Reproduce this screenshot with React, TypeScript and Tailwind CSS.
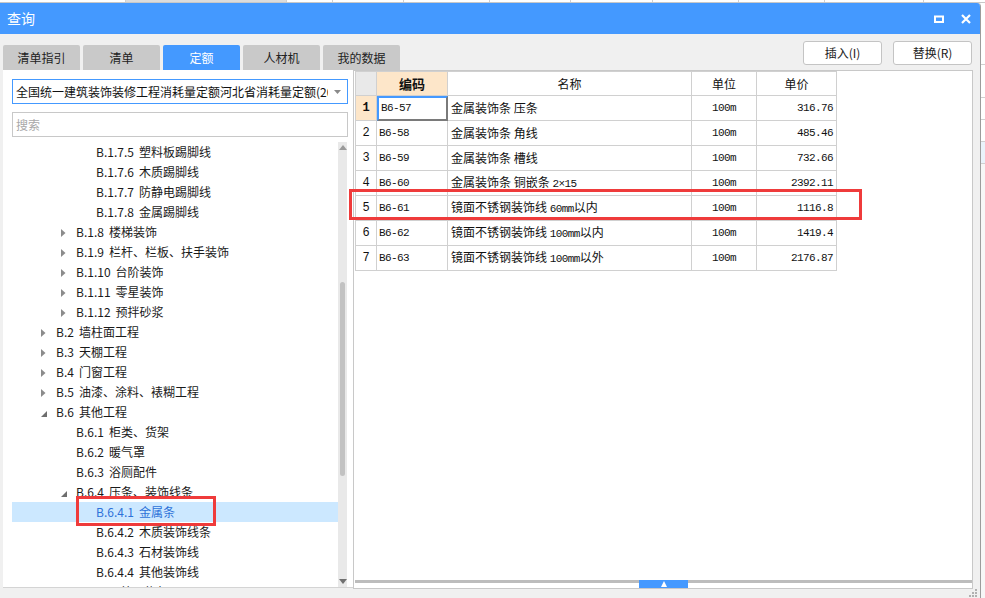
import React from 'react';

const UI = { fontFamily: '"Noto Sans CJK SC", "Microsoft YaHei", sans-serif' };
const MONO = { fontFamily: '"Liberation Mono", "Noto Sans CJK SC", monospace' };

type Node = { label: string; level: 1 | 2 | 3; arrow?: 'closed' | 'open'; selected?: boolean };

const TREE: Node[] = [
  { label: 'B.1.7.5 塑料板踢脚线', level: 3 },
  { label: 'B.1.7.6 木质踢脚线', level: 3 },
  { label: 'B.1.7.7 防静电踢脚线', level: 3 },
  { label: 'B.1.7.8 金属踢脚线', level: 3 },
  { label: 'B.1.8 楼梯装饰', level: 2, arrow: 'closed' },
  { label: 'B.1.9 栏杆、栏板、扶手装饰', level: 2, arrow: 'closed' },
  { label: 'B.1.10 台阶装饰', level: 2, arrow: 'closed' },
  { label: 'B.1.11 零星装饰', level: 2, arrow: 'closed' },
  { label: 'B.1.12 预拌砂浆', level: 2, arrow: 'closed' },
  { label: 'B.2 墙柱面工程', level: 1, arrow: 'closed' },
  { label: 'B.3 天棚工程', level: 1, arrow: 'closed' },
  { label: 'B.4 门窗工程', level: 1, arrow: 'closed' },
  { label: 'B.5 油漆、涂料、裱糊工程', level: 1, arrow: 'closed' },
  { label: 'B.6 其他工程', level: 1, arrow: 'open' },
  { label: 'B.6.1 柜类、货架', level: 2 },
  { label: 'B.6.2 暖气罩', level: 2 },
  { label: 'B.6.3 浴厕配件', level: 2 },
  { label: 'B.6.4 压条、装饰线条', level: 2, arrow: 'open' },
  { label: 'B.6.4.1 金属条', level: 3, selected: true },
  { label: 'B.6.4.2 木质装饰线条', level: 3 },
  { label: 'B.6.4.3 石材装饰线', level: 3 },
  { label: 'B.6.4.4 其他装饰线', level: 3 },
  { label: 'B.6.5 雨篷、旗杆', level: 2 },
];

const ROWS = [
  ['B6-57', '金属装饰条 压条', '316.76'],
  ['B6-58', '金属装饰条 角线', '485.46'],
  ['B6-59', '金属装饰条 槽线', '732.66'],
  ['B6-60', '金属装饰条 铜嵌条 2×15', '2392.11'],
  ['B6-61', '镜面不锈钢装饰线 60mm以内', '1116.8'],
  ['B6-62', '镜面不锈钢装饰线 100mm以内', '1419.4'],
  ['B6-63', '镜面不锈钢装饰线 100mm以外', '2176.87'],
];

const TABS = ['清单指引', '清单', '定额', '人材机', '我的数据'];

const INDENT = { 1: 'pl-[29px]', 2: 'pl-[49px]', 3: 'pl-[69px]' } as const;

function Arrow({ kind }: { kind?: 'closed' | 'open' }) {
  if (kind === 'closed')
    return (
      <svg width="5" height="8" viewBox="0 0 5 8" className="mt-[1px]">
        <path d="M0 0 L4.5 4 L0 8 Z" fill="#8c8c8c" />
      </svg>
    );
  if (kind === 'open')
    return (
      <svg width="6" height="6" viewBox="0 0 6 6" className="mt-[3px]">
        <path d="M6 0 L6 6 L0 6 Z" fill="#6e6e6e" />
      </svg>
    );
  return null;
}

function TreeRow({ node }: { node: Node }) {
  const [code, ...rest] = node.label.split(' ');
  return (
    <div
      className={`flex items-center h-[20px] shrink-0 ${INDENT[node.level]} ${
        node.selected ? 'bg-[#cce8ff] text-[#2d72d9]' : 'text-[#1a1a1a]'
      }`}
    >
      <span className="w-[15px] flex items-center">
        <Arrow kind={node.arrow} />
      </span>
      <span className="text-[12px] whitespace-nowrap">
        {code}
        <span className="inline-block w-[5px]" />
        {rest.join(' ')}
      </span>
    </div>
  );
}

export default function App() {
  return (
    <div className="w-[985px] h-[598px] overflow-hidden relative bg-[#f4f4f4] flex flex-col" style={UI}>
      {/* background app strip behind the dialog */}
      <div className="h-[4px] flex bg-white border-b border-[#c8c8c8]">
        <div className="w-[126px] border-r border-[#d0d0d0]" />
        <div className="w-[161px] border-r border-[#d0d0d0] bg-[#8a8a8a]/30" />
        <div className="w-[46px] border-r border-[#d0d0d0]" />
        <div className="w-[71px] border-r border-[#d0d0d0]" />
        <div className="w-[86px] border-r border-[#d0d0d0]" />
        <div className="w-[81px] border-r border-[#d0d0d0]" />
        <div className="w-[82px] border-r border-[#d0d0d0]" />
        <div className="w-[86px] border-r border-[#d0d0d0]" />
        <div className="w-[86px] border-r border-[#d0d0d0]" />
        <div className="w-[99px] border-r border-[#d0d0d0]" />
      </div>

      <div className="flex flex-1">
        {/* dialog */}
        <div className="w-[981px] flex flex-col bg-[#f0f0f0] border-r border-[#9c9c9c] rounded-tr-[4px] overflow-hidden">
          {/* title bar */}
          <div className="h-[31px] bg-[#4499ff] flex items-center justify-between pl-[7px] pr-[9px]">
            <span className="text-white text-[14px]">查询</span>
            <div className="flex items-center gap-[17px]">
              <svg width="10" height="8" viewBox="0 0 10 8">
                <rect x="1" y="1.5" width="8" height="5.5" fill="none" stroke="white" strokeWidth="2" />
              </svg>
              <svg width="10" height="10" viewBox="0 0 10 10">
                <path d="M1 1 L9 9 M9 1 L1 9" stroke="white" strokeWidth="2.2" />
              </svg>
            </div>
          </div>

          {/* body */}
          <div className="flex-1 flex flex-col pl-[3px] pr-[7px]">
            <div className="h-[36px] flex justify-between items-start">
              <div className="flex gap-[3px] mt-[11px]">
                {TABS.map((t) => (
                  <div
                    key={t}
                    className={`w-[77px] h-[25px] flex items-center justify-center text-[12px] rounded-t-[2px] ${
                      t === '定额' ? 'bg-[#4499ff] text-white' : 'bg-[#c9c9c9] text-[#222]'
                    }`}
                  >
                    {t}
                  </div>
                ))}
              </div>
              <div className="flex gap-[11px] mt-[7px] mr-[1px]">
                <button className="w-[79px] h-[24px] bg-white border border-[#c4c4c4] rounded-[3px] text-[12px] text-[#222]">
                  插入(I)
                </button>
                <button className="w-[79px] h-[24px] bg-white border border-[#c4c4c4] rounded-[3px] text-[12px] text-[#222]">
                  替换(R)
                </button>
              </div>
            </div>

            <div className="flex h-[519px]">
              {/* left panel */}
              <div className="w-[350px] h-[518px] bg-white border-b border-[#d4d4d4] flex flex-col pl-[9px] pr-[5px]">
                <div className="mt-[9px] h-[25px] border border-[#4499ff] flex items-center pl-[3px] pr-[6px]">
                  <div className="flex-1 overflow-hidden whitespace-nowrap text-[12px] text-[#111]">
                    全国统一建筑装饰装修工程消耗量定额河北省消耗量定额(2012)
                  </div>
                  <svg width="7" height="4" viewBox="0 0 7 4" className="ml-[6px]">
                    <path d="M0 0 L7 0 L3.5 4 Z" fill="#8a8a8a" />
                  </svg>
                </div>
                <div className="mt-[8px] h-[25px] border border-[#c8c8c8] flex items-center pl-[3px] text-[12px] text-[#a8a8a8]">
                  搜索
                </div>
                <div className="mt-[5px] h-[445px] flex">
                  <div className="w-[326px] flex flex-col overflow-hidden">
                    {TREE.map((n) => (
                      <TreeRow key={n.label} node={n} />
                    ))}
                  </div>
                  {/* vertical scrollbar */}
                  <div className="w-[9px] bg-[#e9e9e9] flex flex-col items-center">
                    <svg width="8" height="5" viewBox="0 0 8 5" className="mt-[3px]">
                      <path d="M0 5 L4 0 L8 5 Z" fill="#9a9a9a" />
                    </svg>
                    <div className="mt-[132px] w-[5px] h-[194px] rounded-full bg-[#c2c2c2]" />
                    <div className="flex-1" />
                    <svg width="8" height="5" viewBox="0 0 8 5" className="mb-[3px]">
                      <path d="M0 0 L8 0 L4 5 Z" fill="#707070" />
                    </svg>
                  </div>
                </div>
              </div>

              {/* right panel */}
              <div className="w-[620px] h-[519px] bg-white border border-[#c8c8c8] flex flex-col pl-[1px]">
                <div className="grid grid-cols-[21px_71px_244px_65px_80px] w-fit border-l border-t border-[#d0d0d0] text-[12px] text-[#111]">
                  <div className="h-[24px] bg-[#e9e9e9] border-r border-b border-[#d0d0d0]" />
                  <div className="h-[24px] bg-[#fde6c9] border-r border-b border-[#d0d0d0] flex items-center justify-center font-bold text-[13px]">
                    编码
                  </div>
                  <div className="h-[24px] border-r border-b border-[#d0d0d0] flex items-center justify-center">名称</div>
                  <div className="h-[24px] border-r border-b border-[#d0d0d0] flex items-center justify-center">单位</div>
                  <div className="h-[24px] border-r border-b border-[#d0d0d0] flex items-center justify-center">单价</div>
                  {ROWS.map(([code, name, price], i) => (
                    <React.Fragment key={code}>
                      <div
                        className={`h-[25px] border-r border-b border-[#d0d0d0] flex items-center justify-center ${
                          i === 0 ? 'bg-[#fde6c9] font-bold' : ''
                        }`}
                        style={MONO}
                      >
                        {i + 1}
                      </div>
                      <div
                        className={`h-[25px] border-r border-b flex items-center pl-[2px] text-[11px] tracking-[-0.6px] ${
                          i === 0
                            ? 'border-t-2 border-l-2 border-t-[#4499ff] border-l-[#4499ff] border-r-2 border-b-2 border-r-[#7a7a7a] border-b-[#7a7a7a] pl-[1px]'
                            : 'border-[#d0d0d0]'
                        }`}
                        style={MONO}
                      >
                        {code}
                      </div>
                      <div className="h-[25px] border-r border-b border-[#d0d0d0] flex items-center pl-[3px]">
                        <span className="whitespace-pre">
                          {name.split(/([0-9]+mm|[0-9]+×[0-9]+)/).map((part, k) =>
                            /[0-9]/.test(part) ? (
                              <span key={k} className="text-[11px] tracking-[-0.6px]" style={MONO}>
                                {part}
                              </span>
                            ) : (
                              <span key={k}>{part}</span>
                            )
                          )}
                        </span>
                      </div>
                      <div
                        className="h-[25px] border-r border-b border-[#d0d0d0] flex items-center justify-center text-[11px] tracking-[-0.6px]"
                        style={MONO}
                      >
                        100m
                      </div>
                      <div
                        className="h-[25px] border-r border-b border-[#d0d0d0] flex items-center justify-end pr-[3px] text-[11px] tracking-[-0.6px]"
                        style={MONO}
                      >
                        {price}
                      </div>
                    </React.Fragment>
                  ))}
                </div>
                <div className="flex-1" />
                {/* horizontal splitter bar */}
                <div className="h-[8px] flex items-start">
                  <div className="flex-1 h-[3px] bg-[#bcbcbc]" />
                  <div className="w-[49px] h-[8px] bg-[#4499ff] flex items-center justify-center">
                    <svg width="6" height="6" viewBox="0 0 6 6">
                      <path d="M0 6 L3 0 L6 6 Z" fill="white" />
                    </svg>
                  </div>
                  <div className="flex-1 h-[3px] bg-[#bcbcbc]" />
                </div>
              </div>
            </div>

            <div className="flex-1 flex justify-end items-end pb-[1px] -mr-[4px]">
              <svg width="8" height="8" viewBox="0 0 8 8">
                <rect x="6" y="0" width="2" height="2" fill="#b0b0b0" />
                <rect x="3" y="3" width="2" height="2" fill="#b0b0b0" />
                <rect x="6" y="3" width="2" height="2" fill="#b0b0b0" />
                <rect x="0" y="6" width="2" height="2" fill="#b0b0b0" />
                <rect x="3" y="6" width="2" height="2" fill="#b0b0b0" />
                <rect x="6" y="6" width="2" height="2" fill="#b0b0b0" />
              </svg>
            </div>
          </div>
        </div>

        {/* background app on the right */}
        <div className="flex-1 bg-[#f7f7f7] flex flex-col">
          <div className="h-[62px] border-b border-[#d0d0d0] bg-white" />
          <div className="h-[33px] border-b border-[#d0d0d0] bg-white" />
          <div className="h-[22px] border-b border-[#d0d0d0] bg-white" />
          <div className="h-[22px] border-b border-[#d0d0d0] bg-white" />
          <div className="h-[22px] border-b border-[#d0d0d0] bg-[#eaf3fb]" />
        </div>
      </div>

      {/* red annotation boxes */}
      <div className="absolute left-[349px] top-[189px] w-[513px] h-[31px] border-[3px] border-[#ef3b3b]" />
      <div className="absolute left-[76px] top-[496px] w-[140px] h-[30px] border-[3px] border-[#ef3b3b]" />
    </div>
  );
}
